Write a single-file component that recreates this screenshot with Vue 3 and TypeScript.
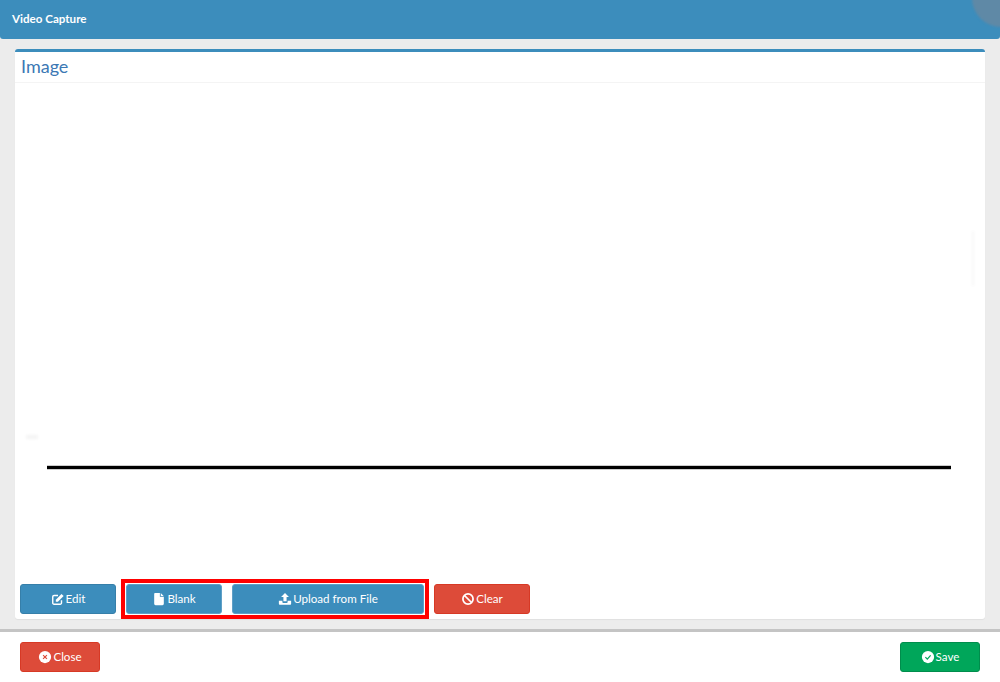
<script setup lang="ts">
</script>

<template>
  <div class="page">
    <header class="topbar">
      <span class="title">Video Capture</span>
      <span class="avatar"></span>
    </header>
    <main class="content">
      <section class="card">
        <h2 class="card-title">Image</h2>
        <div class="canvas">
          <svg class="drawing" viewBox="0 0 970 496" preserveAspectRatio="none">
            <defs>
              <filter id="soft" x="-5%" y="-200%" width="110%" height="500%"><feGaussianBlur stdDeviation="0.7" /></filter>
              <filter id="ghost" x="-100%" y="-200%" width="300%" height="500%"><feGaussianBlur stdDeviation="1.5" /></filter>
            </defs>
            <rect x="11" y="352" width="12" height="4" fill="#f4f4f4" filter="url(#ghost)" />
            <rect x="957" y="148" width="2" height="55" fill="#f7f7f7" filter="url(#ghost)" />
            <rect x="32" y="382.8" width="904" height="3.400" fill="#000" filter="url(#soft)" />
          </svg>
        </div>
        <div class="actions">
          <button class="btn blue" type="button">
            <svg class="icon" viewBox="0 0 16 16">
              <path d="M12 9.500V12.500A1.500 1.500 0 0 1 10.500 14H3.500A1.500 1.500 0 0 1 2 12.500V5.500A1.500 1.500 0 0 1 3.500 4H8" fill="none" stroke="#fff" stroke-width="1.600" />
              <path d="M5.500 8.800 12 2.300 14.400 4.700 7.900 11.200H5.500Z" fill="#fff" />
            </svg>
            Edit
          </button>
          <div class="highlight">
            <button class="btn blue lined" type="button">
              <svg class="icon" viewBox="0 0 16 16">
                <path d="M3.500 1H9V5.500H13.500V13.500A1.500 1.500 0 0 1 12 15H4A1.500 1.500 0 0 1 2.500 13.500V2A1 1 0 0 1 3.500 1ZM10 1.200 13.300 4.500H10Z" fill="#fff" />
              </svg>
              Blank
            </button>
            <button class="btn blue lined wide" type="button">
              <svg class="icon" viewBox="0 0 16 16">
                <path d="M8 1 12.500 5.800H9.800V10.500H6.200V5.800H3.500Z" fill="#fff" />
                <path d="M1 10H5V11.500A1 1 0 0 0 6 12.500H10A1 1 0 0 0 11 11.500V10H15V13.500A1 1 0 0 1 14 14.500H2A1 1 0 0 1 1 13.500Z" fill="#fff" />
              </svg>
              Upload from File
            </button>
          </div>
          <button class="btn red" type="button">
            <svg class="icon" viewBox="0 0 16 16">
              <circle cx="8" cy="8" r="5.800" fill="none" stroke="#fff" stroke-width="2" />
              <path d="M4 4 12 12" stroke="#fff" stroke-width="2" />
            </svg>
            Clear
          </button>
        </div>
      </section>
    </main>
    <footer class="footer">
      <button class="btn red small" type="button">
        <svg class="icon" viewBox="0 0 16 16">
          <circle cx="8" cy="8" r="7" fill="#fff" />
          <path d="M5.800 5.800 10.200 10.200M10.200 5.800 5.800 10.200" stroke="#dd4b39" stroke-width="1.300" />
        </svg>
        Close
      </button>
      <button class="btn green small" type="button">
        <svg class="icon" viewBox="0 0 16 16">
          <circle cx="8" cy="8" r="7" fill="#fff" />
          <path d="M5 8.200 7.200 10.400 11 6.200" fill="none" stroke="#00a65a" stroke-width="1.400" />
        </svg>
        Save
      </button>
    </footer>
  </div>
</template>

<style>
html,
body {
  margin: 0;
  background: #fff;
}
</style>

<style scoped>
.page {
  width: 1000px;
  height: 682px;
  display: flex;
  flex-direction: column;
  overflow: hidden;
  font-family: Lato, "Open Sans", sans-serif;
  background: #ececec;
}

.topbar {
  position: relative;
  flex: 0 0 39px;
  display: flex;
  align-items: center;
  padding: 0 12px 2px;
  overflow: hidden;
  background: #3c8dbc;
  border-radius: 0 0 3px 3px;
  box-sizing: border-box;
}

.title {
  color: #fff;
  font-size: 11.600px;
  font-weight: 700;
}

.avatar {
  position: absolute;
  top: -31px;
  right: -30px;
  width: 58px;
  height: 58px;
  border-radius: 50%;
  background: #5f89a6;
  filter: blur(1px);
}

.content {
  flex: 1;
  min-height: 0;
  display: flex;
  padding: 10px 15px;
}

.card {
  flex: 1;
  display: flex;
  flex-direction: column;
  min-width: 0;
  background: #fff;
  border-top: 3px solid #3c8dbc;
  border-radius: 3px;
  box-shadow: 0 1px 1px rgba(0, 0, 0, 0.05);
}

.card-title {
  flex: 0 0 30px;
  margin: 0;
  padding: 0 6px;
  border-bottom: 1px solid #f4f4f4;
  color: #3c78b4;
  font-size: 18px;
  font-weight: 400;
  line-height: 28px;
}

.canvas {
  flex: 1;
  min-height: 0;
}

.drawing {
  display: block;
  width: 100%;
  height: 100%;
}

.actions {
  display: flex;
  gap: 10px;
  padding: 5px;
}

.highlight {
  position: relative;
  display: flex;
  gap: 10px;
}

.highlight::after {
  content: "";
  position: absolute;
  inset: -5px;
  border: 4px solid #f00;
  pointer-events: none;
}

.btn {
  width: 96px;
  height: 30px;
  display: inline-flex;
  align-items: center;
  justify-content: center;
  gap: 1px;
  padding: 0 0 1px;
  border: 1px solid transparent;
  border-radius: 3px;
  color: #fff;
  font-family: inherit;
  font-size: 11.600px;
  box-sizing: border-box;
}

.wide {
  width: 192px;
}

.small {
  width: 80px;
}

.blue {
  background: #3c8dbc;
  border-color: #367fa9;
}

.lined {
  border-color: #5f9fc6;
}

.red {
  background: #dd4b39;
  border-color: #d73925;
}

.green {
  background: #00a65a;
  border-color: #008d4c;
}

.icon {
  width: 14px;
  height: 14px;
  flex: none;
}

.footer {
  flex: 0 0 53px;
  display: flex;
  justify-content: space-between;
  padding: 10px 20px;
  background: #fff;
  border-top: 3px solid #c4c4c4;
  box-sizing: border-box;
}
</style>
